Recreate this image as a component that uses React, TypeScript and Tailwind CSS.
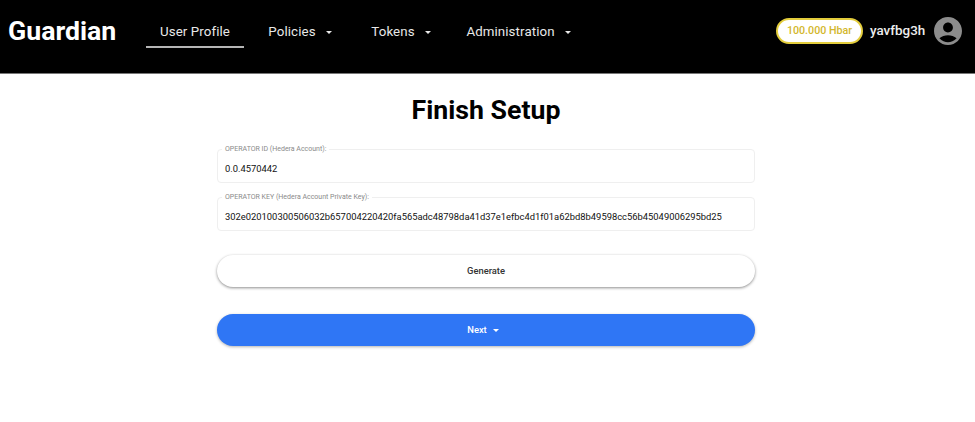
function Caret({ className = "ml-[10px]" }: { className?: string }) {
  return <span className={`inline-block h-0 w-0 border-x-[3.5px] border-t-[3.5px] border-x-transparent border-t-current ${className}`} />;
}

function NavItem({ label, menu, active, className }: { label: string; menu?: boolean; active?: boolean; className: string }) {
  return (
    <div className={`flex h-[34px] items-center justify-center text-[13.3px] tracking-[0.1px] text-[#e8e8e8] ${active ? "border-b-2 border-[#b5b5b5] pt-[4px]" : "pt-[2px]"} ${className}`}>
      <span>{label}</span>
      {menu && <Caret />}
    </div>
  );
}

function Field({ label, value }: { label: string; value: string }) {
  return (
    <div className="relative flex h-[34px] items-center rounded-[4px] border border-[#efefef] pl-[7px] pt-[7px] text-[9.4px] text-[#111]">
      <span className="absolute -top-[5px] left-[4px] bg-white px-[3px] text-[7px] leading-[9px] text-[#8a8a8a]">{label}</span>
      <span>{value}</span>
    </div>
  );
}

export default function App() {
  return (
    <div className="min-h-[422px] bg-white font-['Roboto',sans-serif]">
      <header className="flex h-[74px] items-start border-b border-[#777] bg-black">
        <div className="ml-[8px] mt-[12px] w-[138px] text-[26.7px] font-bold leading-[38px] text-white">Guardian</div>
        <NavItem label="User Profile" active className="mt-[14px] w-[98px]" />
        <NavItem label="Policies" menu className="ml-[23px] mt-[14px] w-[66px]" />
        <NavItem label="Tokens" menu className="ml-[38px] mt-[14px] w-[60px]" />
        <NavItem label="Administration" menu className="ml-[34px] mt-[14px] w-[107px]" />
        <div className="ml-auto mr-[13px] mt-[17px] flex items-center">
          <div className="flex h-[26px] w-[87px] items-center justify-center rounded-full border-2 border-[#e3cd3c] bg-white text-[10.7px] font-medium text-[#d3b72c]">
            100.000 Hbar
          </div>
          <span className="ml-[7px] w-[55px] whitespace-nowrap text-[13.4px] font-medium text-[#eeeeee]">yavfbg3h</span>
          <svg viewBox="2 2 20 20" className="ml-[9px] h-[28px] w-[28px] text-[#8c8c8c]" fill="currentColor">
            <path d="M12 2C6.48 2 2 6.48 2 12s4.48 10 10 10 10-4.48 10-10S17.52 2 12 2zm0 4c1.93 0 3.5 1.57 3.5 3.5S13.93 13 12 13s-3.5-1.57-3.5-3.5S10.07 6 12 6zm0 14c-2.03 0-4.43-.82-6.14-2.88C7.55 15.8 9.68 15 12 15s4.45.8 6.14 2.12C16.43 19.18 14.03 20 12 20z" />
          </svg>
        </div>
      </header>
      <main className="ml-[217px] flex w-[538px] flex-col">
        <h1 className="mt-[19px] text-center text-[26.7px] font-bold leading-[34px] text-black">Finish Setup</h1>
        <div className="mt-[22px] flex flex-col gap-[14px]">
          <Field label="OPERATOR ID (Hedera Account):" value="0.0.4570442" />
          <Field label="OPERATOR KEY (Hedera Account Private Key):" value="302e020100300506032b657004220420fa565adc48798da41d37e1efbc4d1f01a62bd8b49598cc56b45049006295bd25" />
        </div>
        <button className="mt-[24px] h-[32px] rounded-full bg-white text-[9.4px] font-medium text-[#333] shadow-[0_1px_3px_rgba(0,0,0,0.45)]">Generate</button>
        <button className="mt-[27px] flex h-[32px] items-center justify-center rounded-full bg-[#2f76f5] pr-[6px] text-[9.4px] font-medium text-white shadow-[0_1px_3px_rgba(0,0,0,0.3)]">
          Next
          <Caret className="ml-[6px]" />
        </button>
      </main>
    </div>
  );
}
